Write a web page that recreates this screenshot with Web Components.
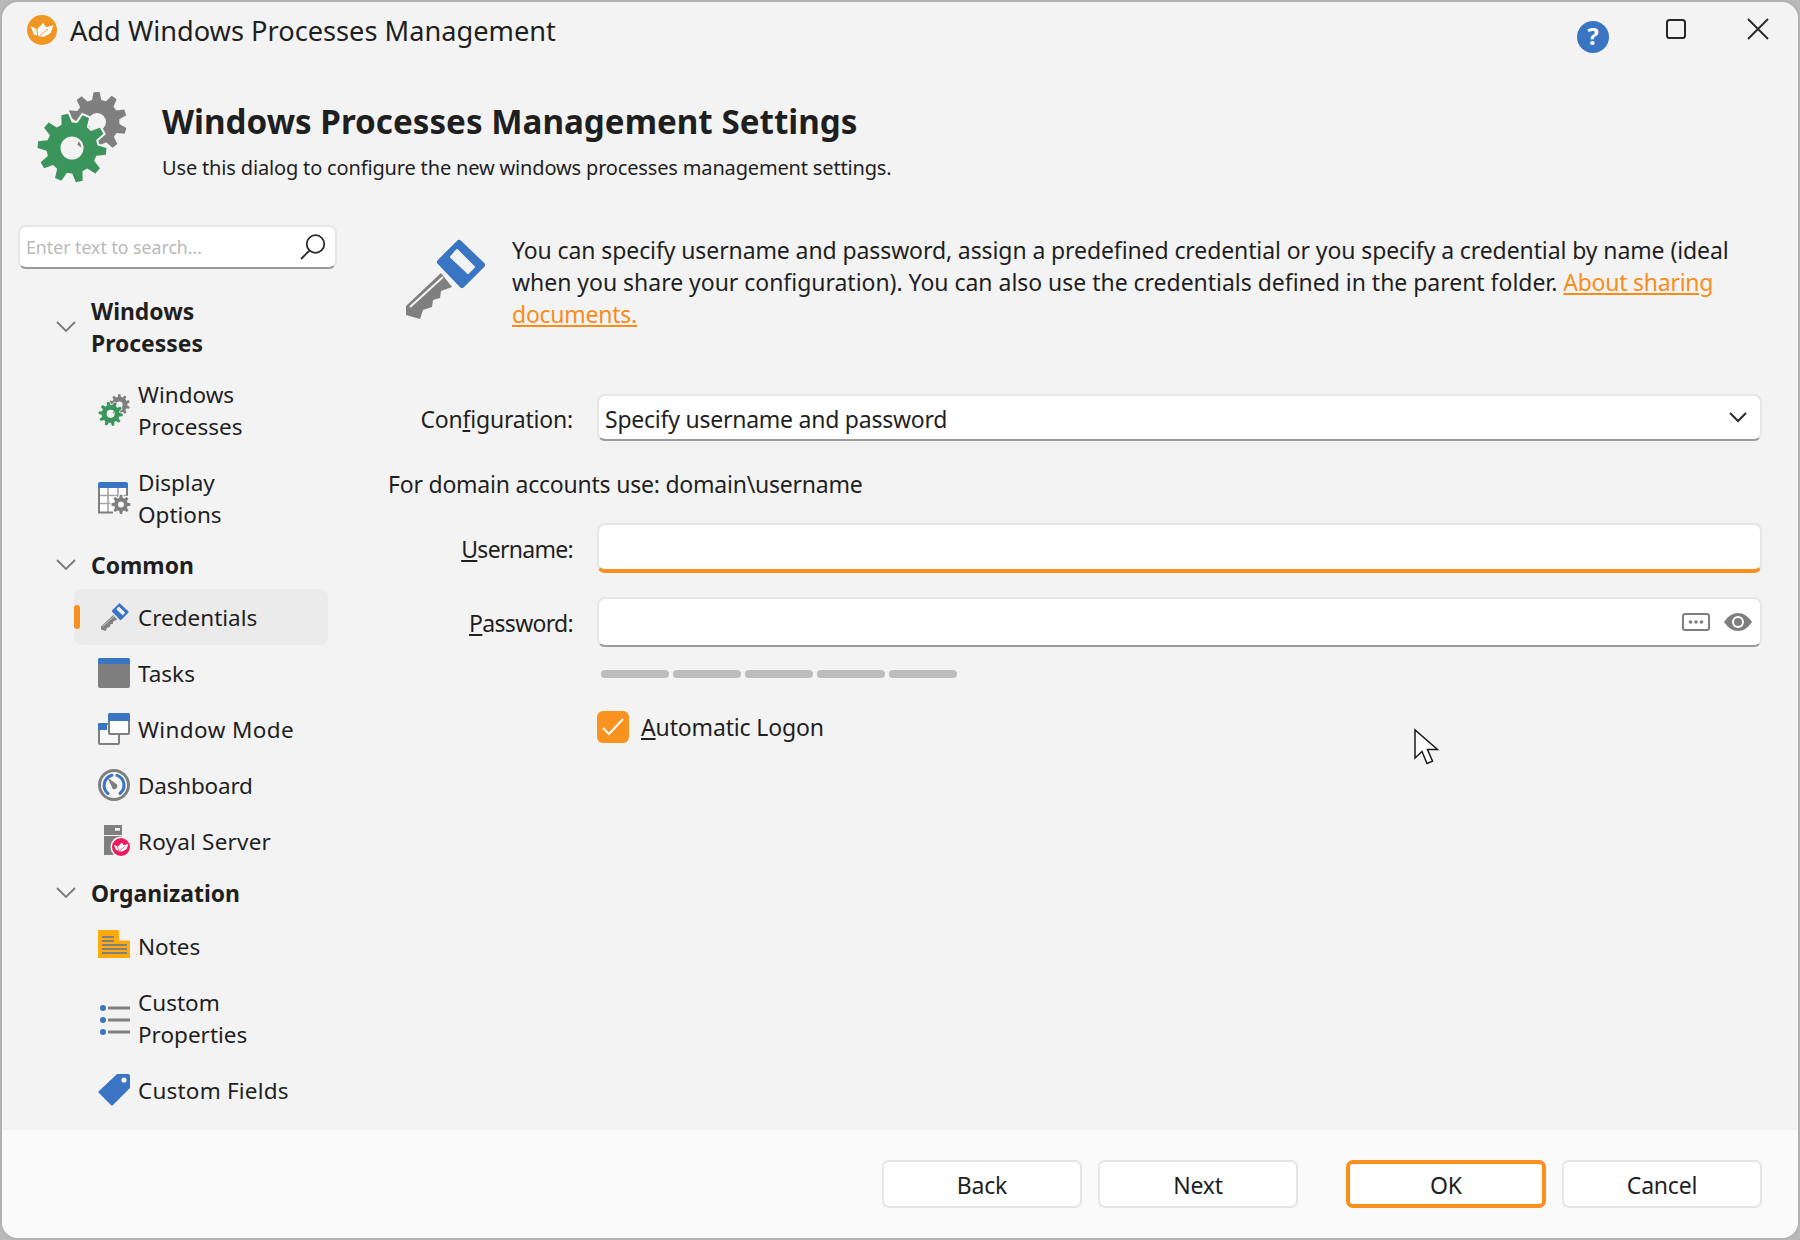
<!DOCTYPE html>
<html>
<head>
<meta charset="utf-8">
<title>Add Windows Processes Management</title>
<style>
  html, body { margin: 0; padding: 0; }
  body { width: 1800px; height: 1240px; overflow: hidden; font-family: "Noto Sans", "Open Sans", sans-serif; color: #1f1f1f; }
</style>
</head>
<body>
<process-dialog>
  <span slot="title">Add Windows Processes Management</span>
  <span slot="heading">Windows Processes Management Settings</span>
  <span slot="sub">Use this dialog to configure the new windows processes management settings.</span>

  <nav-tree slot="nav">
    <nav-group label="Windows Processes" style="--top:7px;--bottom:6px"></nav-group>
    <nav-item icon="gears">Windows Processes</nav-item>
    <nav-item icon="display">Display Options</nav-item>
    <nav-group label="Common" style="--top:8px;--bottom:7px"></nav-group>
    <nav-item icon="key" selected>Credentials</nav-item>
    <nav-item icon="tasks">Tasks</nav-item>
    <nav-item icon="window" style="letter-spacing:.4px">Window Mode</nav-item>
    <nav-item icon="dashboard" style="letter-spacing:-.2px">Dashboard</nav-item>
    <nav-item icon="server" style="letter-spacing:.2px">Royal Server</nav-item>
    <nav-group label="Organization" style="--top:9px;--bottom:8px"></nav-group>
    <nav-item icon="notes">Notes</nav-item>
    <nav-item icon="props">Custom Properties</nav-item>
    <nav-item icon="tag" style="letter-spacing:.2px">Custom Fields</nav-item>
  </nav-tree>

  <credentials-form slot="main"></credentials-form>

  <dialog-button slot="nav-buttons">Back</dialog-button>
  <dialog-button slot="nav-buttons">Next</dialog-button>
  <dialog-button slot="ok-buttons" primary>OK</dialog-button>
  <dialog-button slot="ok-buttons">Cancel</dialog-button>
</process-dialog>

<script>
// builds a gear outline as one path, hole included
function gearPath(cx, cy, outer, root, hole, teeth, rot) {
    let d = '';
    const step = Math.PI * 2 / teeth;
    for (let i = 0; i < teeth; i++) {
        const a = i * step + (rot || 0);
        const pts = [
            [root, a - step * 0.33],
            [outer, a - step * 0.16],
            [outer, a + step * 0.16],
            [root, a + step * 0.33]
        ];
        pts.forEach((p, j) => {
            const x = (cx + p[0] * Math.cos(p[1])).toFixed(2);
            const y = (cy + p[0] * Math.sin(p[1])).toFixed(2);
            d += (i === 0 && j === 0 ? 'M' : 'L') + x + ' ' + y;
        });
    }
    d += 'Z';
    d += `M${cx - hole} ${cy}a${hole} ${hole} 0 1 0 ${hole * 2} 0a${hole} ${hole} 0 1 0 ${-hole * 2} 0Z`;
    return d;
}

const BLUE = '#3a75c4';
const GREY = '#7f7f7f';
const PAPER = '#f3f3f3';

const crown = (fill, slit) => `
    <path fill="${fill}" d="M3.700 11.300L9 13.700l1.300 6.600-3.300-.6z"/>
    <path fill="${fill}" d="M10.300 13.700L16.300 8 19 12.300 26.300 10.300 23.700 18 17 21.700 11.300 21.300z"/>
    <path fill="none" stroke="${slit}" stroke-width="1" d="M13 20.500L21 14"/>`;

const gears = `
    <path fill-rule="evenodd" fill="${GREY}" d="${gearPath(61, 30, 30, 22.500, 9, 10, 0.3)}"/>
    <path fill-rule="evenodd" fill="#3a945c" stroke="${PAPER}" stroke-width="4" paint-order="stroke" d="${gearPath(36, 56, 34.500, 25.500, 11.500, 10, 0.1)}"/>`;

const ICONS = {
    gears: { box: '0 0 91 90', body: gears },
    key: { box: '0 0 80 80', body: `
        <path fill="${GREY}" d="M35 34L0 67v9l14 4 3-9 9-3 1-7 7-2 1-7 11-4z"/>
        <path stroke="#f3f3f3" stroke-width="2" d="M4 68L37 38"/>
        <path fill="${BLUE}" stroke="${BLUE}" stroke-width="6" stroke-linejoin="round" d="M53 4L76 26 56 46 34 23z"/>
        <path fill="#f3f3f3" stroke="#f3f3f3" stroke-width="2" stroke-linejoin="round" d="M51 11L68 28 62 34 45 18z"/>` },
    display: { box: '0 0 32 32', body: `
        <path fill="#fff" d="M1 6h28v24H1z"/>
        <path fill="none" stroke="#a3a3a3" stroke-width="1.600" d="M10 6v24M20 6v12M1 13.500h28M1 21.500h14"/>
        <path fill="none" stroke="${GREY}" stroke-width="2" d="M1 5v25.500h14M29 5v9"/>
        <path fill="${BLUE}" d="M2 0h26a2 2 0 0 1 2 2v4H0V2a2 2 0 0 1 2-2z"/>
        <path fill-rule="evenodd" fill="${GREY}" stroke="${PAPER}" stroke-width="2.500" paint-order="stroke" d="${gearPath(23, 22.500, 9.500, 6.800, 3, 8, 0)}"/>` },
    tasks: { box: '0 0 32 30', body: `
        <rect width="32" height="30" rx="2" fill="${GREY}"/>
        <path fill="${BLUE}" d="M2 0h28a2 2 0 0 1 2 2v4H0V2a2 2 0 0 1 2-2z"/>` },
    window: { box: '0 0 32 32', body: `
        <rect x="1" y="11" width="20" height="20" rx="1" fill="#f7f7f7" stroke="${GREY}" stroke-width="2"/>
        <path fill="${BLUE}" d="M1 10h8v7H0v-6z"/>
        <rect x="10" y="0" width="22" height="22" rx="2" fill="${GREY}"/>
        <rect x="12" y="8" width="18" height="12" fill="#fff"/>
        <path fill="${BLUE}" d="M12 0h18a2 2 0 0 1 2 2v6H10V2a2 2 0 0 1 2-2z"/>` },
    dashboard: { box: '0 0 32 32', body: `
        <circle cx="16" cy="16" r="14.500" fill="#f7f7f7" stroke="${GREY}" stroke-width="3"/>
        <path fill="none" stroke="${BLUE}" stroke-width="3" stroke-linecap="round" d="M10 24.500A10.500 10.500 0 0 1 14 6.200M19 6.400A10.500 10.500 0 0 1 22 24.500"/>
        <path fill="${GREY}" d="M9.500 8.500l9.500 7a3.200 3.200 0 0 1-4.200 4.400z"/>` },
    server: { box: '0 0 32 32', body: `
        <path fill="${GREY}" d="M6 0h18v10H6zM6 11h18v19H6z"/>
        <rect x="17" y="3" width="5" height="2.600" fill="#fff"/>
        <circle cx="23" cy="22" r="10.500" fill="${PAPER}"/>
        <circle cx="23" cy="22" r="9" fill="#ee1a5e"/>
        <g transform="translate(13.500 12.500) scale(.64)">${crown('#fff', '#ee1a5e')}</g>` },
    notes: { box: '0 0 32 28', body: `
        <path fill="#ffa90a" d="M0 0h20l12 11v17H0z"/>
        <path fill="${PAPER}" d="M21 0l11 10.500H21z"/>
        <path stroke="${GREY}" stroke-width="2" d="M4 7h12M4 11h12M4 15h25M4 19h25M4 23h25"/>` },
    props: { box: '0 0 32 32', body: `
        <circle cx="5" cy="6" r="3" fill="${BLUE}"/><circle cx="5" cy="18" r="3" fill="${BLUE}"/><circle cx="5" cy="30" r="3" fill="${BLUE}"/>
        <path stroke="${GREY}" stroke-width="3" d="M10 6h22M10 18h22M10 30h22"/>` },
    tag: { box: '0 0 32 32', body: `
        <path fill="${BLUE}" d="M18 1a2 2 0 0 1 1-1h11a2 2 0 0 1 2 2v12l-18 18L0 18z"/>
        <circle cx="26" cy="6" r="2.600" fill="#f3f3f3"/>` },
    logo: { box: '0 0 30 30', body: `
        <circle cx="15" cy="15" r="15" fill="#ef9722"/>
        ${crown('#fff', '#ef9722')}` },
    search: { box: '0 0 26 26', body: `
        <circle cx="15.500" cy="10" r="8.800" fill="none" stroke="#2b2b2b" stroke-width="1.800"/>
        <path stroke="#2b2b2b" stroke-width="1.800" d="M9.500 16.500L1 25"/>` },
    help: { box: '0 0 32 32', body: `
        <circle cx="16" cy="16" r="16" fill="${BLUE}"/>
        <text x="16" y="24" text-anchor="middle" fill="#fff" font-family="Noto Sans, sans-serif" font-weight="700" font-size="24">?</text>` },
    maximize: { box: '0 0 20 20', body: `<rect x="1" y="1" width="18" height="18" rx="2.500" fill="none" stroke="#262626" stroke-width="2"/>` },
    close: { box: '0 0 22 22', body: `<path fill="none" stroke="#262626" stroke-width="1.800" d="M1 1l20 20M21 1L1 21"/>` },
    chevron: { box: '0 0 20 12', body: `<path fill="none" stroke="#7a7a7a" stroke-width="1.800" d="M1 1l9 9 9-9"/>` },
    chevronDark: { box: '0 0 18 11', body: `<path fill="none" stroke="#2b2b2b" stroke-width="2" d="M1 1l8 8 8-8"/>` },
    dots: { box: '0 0 28 18', body: `
        <rect x="1" y="1" width="26" height="16" rx="2" fill="none" stroke="${GREY}" stroke-width="2"/>
        <circle cx="8.500" cy="9" r="1.800" fill="${GREY}"/><circle cx="14" cy="9" r="1.800" fill="${GREY}"/><circle cx="19.500" cy="9" r="1.800" fill="${GREY}"/>` },
    eye: { box: '0 0 28 18', body: `
        <path fill="${GREY}" d="M0 9C4 3 9 0 14 0s10 3 14 9c-4 6-9 9-14 9S4 15 0 9z"/>
        <circle cx="14" cy="9" r="6" fill="#fff"/><circle cx="14" cy="9" r="4" fill="${GREY}"/>` },
    check: { box: '0 0 32 32', body: `
        <rect width="32" height="32" rx="6" fill="#fa921f"/>
        <path fill="none" stroke="#fff" stroke-width="2" d="M6 17l6 6L26 8"/>` },
    cursor: { box: '0 0 26 38', body: `<path fill="#fff" stroke="#1a1a1a" stroke-width="1.500" stroke-linejoin="miter" d="M1 1v28l7-6.500 5 12 5.500-2.300-5-11.700h10z"/>` }
};

class AppIcon extends HTMLElement {
    connectedCallback() {
        const icon = ICONS[this.getAttribute('name')];
        const w = this.getAttribute('w') || 32;
        const h = this.getAttribute('h') || 32;
        this.attachShadow({ mode: 'open' }).innerHTML = `
            <style>
                :host { display: block; width: ${w}px; height: ${h}px; flex: none; }
                svg { display: block; width: 100%; height: 100%; overflow: visible; }
            </style>
            <svg viewBox="${icon.box}" xmlns="http://www.w3.org/2000/svg">${icon.body}</svg>
        `;
    }
}
customElements.define('app-icon', AppIcon);

class ProcessDialog extends HTMLElement {
    constructor() {
        super();
        this.attachShadow({ mode: 'open' }).innerHTML = `
            <style>
                :host {
                    display: block;
                    position: relative;
                    width: 1800px;
                    height: 1240px;
                    background:
                        linear-gradient(90deg, #b9b9b9 160px, #4f8f5f 160px, #4f8f5f 172px, #b9b9b9 172px, #b9b9b9 240px, #4c78b8 240px, #4c78b8 248px, #b9b9b9 248px, #b9b9b9 360px, #4f8f5f 360px, #4f8f5f 368px, #b9b9b9 368px, #b9b9b9 1547px, #c8963c 1547px, #c8963c 1553px, #b9b9b9 1553px, #b9b9b9 1589px, #c8963c 1589px, #c8963c 1595px, #b9b9b9 1595px, #b9b9b9 1654px, #5a7fb5 1654px, #5a7fb5 1681px, #b9b9b9 1681px) top / 100% 4px no-repeat,
                        #b9b9b9;
                }
                .window {
                    box-sizing: border-box;
                    width: 100%;
                    height: 100%;
                    display: flex;
                    flex-direction: column;
                    background: #f3f3f3;
                    border: 2px solid #b2b2b2;
                    border-radius: 18px;
                    overflow: hidden;
                }
                .titlebar {
                    display: flex;
                    align-items: flex-start;
                    height: 90px;
                    padding: 12px 29px 0 25px;
                    box-sizing: border-box;
                    flex: none;
                }
                .title {
                    margin: -1px 0 0 13px;
                    flex: 1;
                    font-size: 27.200px;
                    line-height: 36px;
                }
                .help { margin: 7px 57px 0 0; }
                .max { margin: 5px 61px 0 0; }
                .close { margin-top: 4px; }
                .head {
                    display: flex;
                    flex: none;
                    height: 133px;
                    padding-left: 34px;
                    gap: 35px;
                }
                .heading {
                    font-size: 33.200px;
                    font-weight: 700;
                    line-height: 44px;
                    margin-top: 8px;
                }
                .sub {
                    font-size: 20px;
                    letter-spacing: -.16px;
                    line-height: 30px;
                    margin-top: 9px;
                }
                .body { flex: 1; display: flex; min-height: 0; }
                .side { width: 336px; flex: none; padding: 0 1px 0 16px; box-sizing: border-box; }
                .main { flex: 1; min-width: 0; }
                .footer {
                    flex: none;
                    height: 108px;
                    box-sizing: border-box;
                    padding: 30px 36px 0 0;
                    background: #fafafa;
                    display: flex;
                    justify-content: flex-end;
                    gap: 48px;
                }
                .btns { display: flex; gap: 16px; }
                .pointer { position: absolute; left: 1414px; top: 729px; }
            </style>
            <div class="window">
                <div class="titlebar">
                    <app-icon name="logo" w="30" h="30" style="margin-top:1px"></app-icon>
                    <div class="title"><slot name="title"></slot></div>
                    <app-icon class="help" name="help"></app-icon>
                    <app-icon class="max" name="maximize" w="20" h="20"></app-icon>
                    <app-icon class="close" name="close" w="22" h="22"></app-icon>
                </div>
                <div class="head">
                    <app-icon name="gears" w="91" h="90"></app-icon>
                    <div>
                        <div class="heading"><slot name="heading"></slot></div>
                        <div class="sub"><slot name="sub"></slot></div>
                    </div>
                </div>
                <div class="body">
                    <div class="side">
                        <text-field placeholder="Enter text to search..." height="44" icon="search"></text-field>
                        <slot name="nav"></slot>
                    </div>
                    <div class="main"><slot name="main"></slot></div>
                </div>
                <div class="footer">
                    <div class="btns"><slot name="nav-buttons"></slot></div>
                    <div class="btns"><slot name="ok-buttons"></slot></div>
                </div>
            </div>
            <app-icon class="pointer" name="cursor" w="26" h="38"></app-icon>
        `;
    }
}
customElements.define('process-dialog', ProcessDialog);

class TextField extends HTMLElement {
    connectedCallback() {
        const placeholder = this.getAttribute('placeholder') || '';
        const value = this.getAttribute('value') || '';
        const height = this.getAttribute('height') || 50;
        this.attachShadow({ mode: 'open' }).innerHTML = `
            <style>
                :host { display: block; }
                .box {
                    box-sizing: border-box;
                    height: ${height}px;
                    display: flex;
                    align-items: center;
                    background: #fff;
                    border: 2px solid #e6e6e6;
                    border-bottom: 2px solid #9b9b9b;
                    border-radius: 8px;
                    padding: 0 8px 0 6px;
                    font-size: 23px;
                }
                :host([focused]) .box { border-bottom: 4px solid #fa8f1d; }
                .text { flex: 1; white-space: nowrap; letter-spacing: -.24px; margin-top: 2px; }
                .ph { flex: 1; color: #b9b9b9; font-size: 17.700px; margin-top: -1px; }
                .tools { display: flex; align-items: center; gap: 14px; }
                ::slotted(*) { flex: none; }
            </style>
            <div class="box">
                ${placeholder ? `<span class="ph">${placeholder}</span>` : `<span class="text">${value}</span>`}
                <span class="tools"><slot></slot></span>
                ${this.getAttribute('icon') ? `<app-icon name="${this.getAttribute('icon')}" w="26" h="26" style="margin-right:1px"></app-icon>` : ''}
            </div>
        `;
    }
}
customElements.define('text-field', TextField);

class NavTree extends HTMLElement {
    constructor() {
        super();
        this.attachShadow({ mode: 'open' }).innerHTML = `
            <style>:host { display: block; margin-top: 20px; }</style>
            <slot></slot>
        `;
    }
}
customElements.define('nav-tree', NavTree);

class NavGroup extends HTMLElement {
    connectedCallback() {
        const label = this.getAttribute('label') || '';
        this.attachShadow({ mode: 'open' }).innerHTML = `
            <style>
                :host {
                    display: flex;
                    align-items: center;
                    padding: var(--top, 8px) 0 var(--bottom, 8px) 38px;
                    font-size: 22.900px;
                    font-weight: 700;
                    line-height: 32px;
                }
                app-icon { margin-right: 15px; margin-top: -2px; }
                .label { width: 130px; }
            </style>
            <app-icon name="chevron" w="20" h="12"></app-icon>
            <span class="label">${label}</span>
        `;
    }
}
customElements.define('nav-group', NavGroup);

class NavItem extends HTMLElement {
    connectedCallback() {
        const icon = this.getAttribute('icon');
        const sizes = {
            key: 'w="28" h="28" style="margin:0 1px 0 3px"',
            tasks: 'h="30"',
            notes: 'h="28" style="margin-top:-4px"'
        };
        this.attachShadow({ mode: 'open' }).innerHTML = `
            <style>
                :host {
                    display: flex;
                    align-items: center;
                    position: relative;
                    width: 254px;
                    margin-left: 56px;
                    box-sizing: border-box;
                    padding: 12px 8px 12px 24px;
                    border-radius: 8px;
                    font-size: 22.500px;
                    line-height: 32px;
                }
                :host([selected]) { background: #ebebeb; }
                :host([selected])::before {
                    content: '';
                    position: absolute;
                    left: 0;
                    top: 16px;
                    width: 6px;
                    height: 24px;
                    border-radius: 3px;
                    background: #fa8f1d;
                }
                .label { margin: 1px 0 -1px 8px; width: 160px; }
            </style>
            <app-icon name="${icon}" ${sizes[icon] || ''}></app-icon>
            <span class="label"><slot></slot></span>
        `;
    }
}
customElements.define('nav-item', NavItem);

class FormRow extends HTMLElement {
    constructor() {
        super();
        this.attachShadow({ mode: 'open' }).innerHTML = `
            <style>
                :host {
                    display: grid;
                    grid-template-columns: 185px 1fr;
                    column-gap: 24px;
                    align-items: center;
                }
                .label { text-align: right; white-space: nowrap; }
            </style>
            <div class="label"><slot name="label"></slot></div>
            <div><slot></slot></div>
        `;
    }
}
customElements.define('form-row', FormRow);

class CredentialsForm extends HTMLElement {
    constructor() {
        super();
        this.attachShadow({ mode: 'open' }).innerHTML = `
            <style>
                :host {
                    display: block;
                    padding: 9px 36px 0 50px;
                    font-size: 23px;
                    line-height: 32px;
                }
                .info { display: flex; height: 96px; margin-bottom: 64px; }
                .info p { margin: 0; width: 1240px; letter-spacing: -.025px; }
                .first { letter-spacing: -.1px; }
                .info app-icon { margin: 5px 26px 0 18px; }
                a { color: #f98d1c; text-decoration: underline; letter-spacing: -.25px; }
                .domain { margin: 27px 0 23px; letter-spacing: -.22px; }
                .bars { display: flex; gap: 4px; margin: 23px 0 33px 213px; }
                .bars span { width: 68px; height: 8px; border-radius: 4px; background: #bcbcbc; }
                .pass { margin-top: 24px; }
                .auto { display: flex; align-items: center; gap: 12px; margin-left: 209px; }
                .auto span { letter-spacing: -.15px; }
                .narrow { letter-spacing: -.7px; position: relative; top: 1px; }
                .cfg { letter-spacing: -.2px; position: relative; top: 1px; }
            </style>
            <div class="info">
                <app-icon name="key" w="80" h="80"></app-icon>
                <p><span class="first">You can specify username and password, assign a predefined credential or you specify a credential by name (ideal</span> when you share your configuration). You can also use the credentials defined in the parent folder. <a href="#">About sharing documents.</a></p>
            </div>
            <form-row>
                <span slot="label" class="cfg">Con<u>f</u>iguration:</span>
                <text-field height="47" value="Specify username and password">
                    <app-icon name="chevronDark" w="18" h="11" style="margin-right:5px"></app-icon>
                </text-field>
            </form-row>
            <div class="domain">For domain accounts use: domain\\username</div>
            <form-row>
                <span slot="label" class="narrow"><u>U</u>sername:</span>
                <text-field focused></text-field>
            </form-row>
            <form-row class="pass">
                <span slot="label" class="narrow"><u>P</u>assword:</span>
                <text-field>
                    <app-icon name="dots" w="28" h="18"></app-icon>
                    <app-icon name="eye" w="28" h="18"></app-icon>
                </text-field>
            </form-row>
            <div class="bars"><span></span><span></span><span></span><span></span><span></span></div>
            <div class="auto">
                <app-icon name="check"></app-icon>
                <span><u>A</u>utomatic Logon</span>
            </div>
        `;
    }
}
customElements.define('credentials-form', CredentialsForm);

class DialogButton extends HTMLElement {
    constructor() {
        super();
        this.attachShadow({ mode: 'open' }).innerHTML = `
            <style>
                :host {
                    display: flex;
                    align-items: center;
                    justify-content: center;
                    box-sizing: border-box;
                    width: 200px;
                    height: 48px;
                    padding-top: 1px;
                    background: #fff;
                    border: 2px solid #e6e6e6;
                    border-radius: 7px;
                    font-size: 23px;
                    letter-spacing: -.2px;
                }
                :host([primary]) { border: 4px solid #fa8f1d; }
            </style>
            <slot></slot>
        `;
    }
}
customElements.define('dialog-button', DialogButton);
</script>
</body>
</html>
